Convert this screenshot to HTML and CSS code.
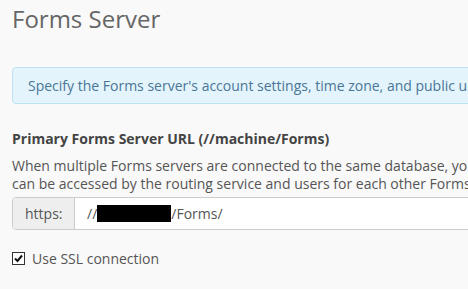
FILE: index.html
```html
<!DOCTYPE html>
<html lang="en">
<head>
  <meta charset="UTF-8">
  <title>Forms Server</title>
  <link rel="stylesheet" href="styles.css">
</head>
<body>
<div class="settings-page">
  <h1 class="page-title">Forms Server</h1>
  <div class="alert alert-info">
    Specify the Forms server's account settings, time zone, and public url settings for this server.
  </div>
  <div class="form-group">
    <label class="control-label">Primary Forms Server URL (//machine/Forms)</label>
    <p class="help-text">When multiple Forms servers are connected to the same database, you must specify a URL that<br>can be accessed by the routing service and users for each other Forms server.</p>
    <div class="input-group">
      <span class="addon">https:</span>
      <div class="form-control">//<span class="redacted"></span>/Forms/</div>
    </div>
  </div>
  <label class="checkbox">
    <span class="check-box">
      <svg width="13" height="13" viewBox="0 0 13 13">
        <rect x="0.5" y="0.5" width="12" height="12" fill="#fff" stroke="#333"/>
        <path d="M3 6.5 L5.5 9 L10 3.5" fill="none" stroke="#111" stroke-width="2"/>
      </svg>
    </span>
    Use SSL connection
  </label>
</div>
</body>
</html>
```

FILE: styles.css
```css
* {
    box-sizing: border-box;
}

html, body {
    width: 100%;
    height: 100%;
    margin: 0;
    padding: 0;
    overflow: hidden;
}

body {
    background: #f9f9f9;
    font-family: 'Open Sans', Arial, sans-serif;
    font-size: 14px;
    color: #555;
}

.settings-page {
    width: 760px;
    padding: 0 12px;
}

.page-title {
    margin: 0;
    padding-top: 4px;
    font-size: 24px;
    font-weight: 400;
    line-height: 30px;
    color: #666;
}

.alert {
    margin-top: 33px;
    padding: 8px 15px;
    border: 1px solid #bce3f3;
    border-radius: 4px;
    line-height: 19px;
}

.alert-info {
    background: #e3f4fc;
    color: #4a7696;
}

.form-group {
    margin-top: 25px;
}

.control-label {
    display: block;
    font-weight: 700;
    color: #444;
    line-height: 19px;
}

.help-text {
    margin: 9px 0 0;
    line-height: 18px;
    white-space: nowrap;
}

.input-group {
    display: flex;
    height: 33px;
    margin-top: 4px;
    border: 1px solid #ccc;
    border-radius: 4px;
    background: #fff;
    overflow: hidden;
}

.input-group .addon {
    display: flex;
    align-items: center;
    padding: 0 12px;
    width: 62px;
    background: #eee;
    border-right: 1px solid #ccc;
    color: #555;
}

.input-group .form-control {
    display: flex;
    align-items: center;
    flex: 1 1 0;
    padding: 0 12px;
    color: #555;
}

.redacted {
    display: inline-block;
    width: 74px;
    height: 17px;
    background: #000;
}

.checkbox {
    display: flex;
    align-items: center;
    margin-top: 19px;
    gap: 7px;
    color: #555;
}

.check-box {
    display: flex;
}
```
